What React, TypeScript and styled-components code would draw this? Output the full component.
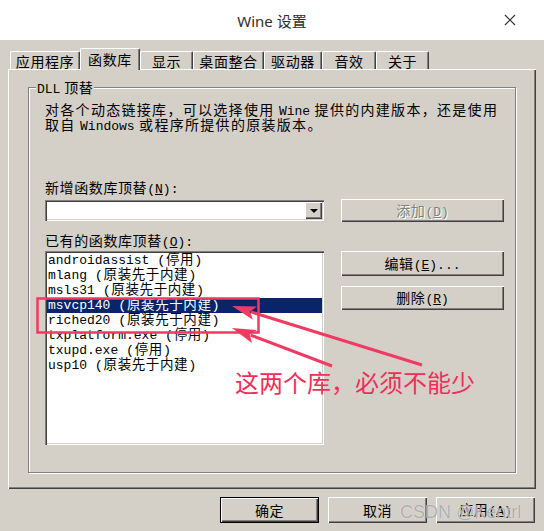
import React from 'react';
import styled, { createGlobalStyle, css } from 'styled-components';

const GlobalStyle = createGlobalStyle`
  html, body {
    margin: 0;
    padding: 0;
    background: #d4d0c8;
  }
  body {
    width: 544px;
    height: 531px;
    overflow: hidden;
  }
`;

const raised = css`
  box-shadow: inset 1px 1px 0 #fff, inset -1px -1px 0 #404040,
    inset -2px -2px 0 #808080;
`;

const sunken = css`
  box-shadow: inset 1px 1px 0 #808080, inset 2px 2px 0 #404040,
    inset -1px -1px 0 #fff, inset -2px -2px 0 #d4d0c8;
`;

const Window = styled.div`
  position: relative;
  width: 544px;
  height: 531px;
  background: #d4d0c8;
  display: flex;
  flex-direction: column;
  font-family: 'Noto Sans CJK SC', sans-serif;
  font-size: 14px;
  color: #000;
`;

const TitleBar = styled.div`
  height: 40px;
  background: #fff;
  display: grid;
  grid-template-columns: 1fr auto 1fr;
  align-items: center;
`;

const Title = styled.div`
  font-family: 'Noto Sans', 'Noto Sans CJK SC', sans-serif;
  font-size: 15px;
  color: #2e2e2e;
`;

const Close = styled.div`
  justify-self: end;
  margin-right: 28px;
  display: flex;
`;

const Body = styled.div`
  padding: 8px 8px 0 8px;
  display: flex;
  flex-direction: column;
`;

const TabStrip = styled.div`
  height: 21px;
  display: flex;
  align-items: flex-end;
  padding-left: 2px;
`;

const Tab = styled.div<{ $w: number; $active?: boolean }>`
  position: relative;
  box-sizing: border-box;
  width: ${(p) => p.$w}px;
  height: ${(p) => (p.$active ? 22 : 18)}px;
  margin-bottom: ${(p) => (p.$active ? -1 : 0)}px;
  z-index: ${(p) => (p.$active ? 1 : 0)};
  display: flex;
  align-items: center;
  justify-content: center;
  background: #d4d0c8;
  border-top: 1px solid #fff;
  border-left: 1px solid #fff;
  border-right: 1px solid #404040;
  box-shadow: inset -1px 0 0 #808080;
  border-radius: 2px 2px 0 0;
  line-height: 1;
  letter-spacing: 0.6px;
  padding-bottom: ${(p) => (p.$active ? 2 : 0)}px;
`;

const Panel = styled.div`
  box-sizing: border-box;
  height: 420px;
  padding: 10px 20px 16px 20px;
  display: flex;
  ${raised};
`;

const GroupBox = styled.fieldset`
  flex: 1;
  min-width: 0;
  margin: 0;
  padding: 7px 0 0 16px;
  border: 1px solid #808080;
  box-shadow: 1px 1px 0 #fff, inset 1px 1px 0 #fff;
`;

const Legend = styled.legend`
  margin-left: -9px;
  padding: 0 1px;
  height: 16px;
  background: #d4d0c8;
  line-height: 16px;
  letter-spacing: 0.6px;
`;

const Mono = styled.span`
  font-family: 'Liberation Mono', monospace;
  font-size: 13px;
  line-height: 1;
  letter-spacing: 0;
`;

const U = styled.span`
  text-decoration: underline;
`;

const Description = styled.div`
  letter-spacing: 1.3px;
  white-space: nowrap;
`;

const DescLine = styled.div`
  height: 15px;
  line-height: 15px;
`;

const Form = styled.div`
  margin-top: 48px;
  display: grid;
  grid-template-columns: 279px 163px;
  column-gap: 17px;
  align-items: center;
`;

const FieldLabel = styled.div<{ $top?: number; $bottom?: number }>`
  grid-column: 1 / -1;
  height: 14px;
  line-height: 14px;
  letter-spacing: 0.6px;
  margin-top: ${(p) => p.$top ?? 0}px;
  margin-bottom: ${(p) => p.$bottom ?? 0}px;
`;

const Combo = styled.div`
  box-sizing: border-box;
  height: 21px;
  background: #fff;
  display: flex;
  justify-content: flex-end;
  align-items: center;
  padding-right: 2px;
  ${sunken};
`;

const ComboButton = styled.div`
  width: 17px;
  height: 17px;
  background: #d4d0c8;
  display: flex;
  align-items: center;
  justify-content: center;
  ${raised};
`;

const Triangle = styled.div`
  width: 0;
  height: 0;
  border-left: 4px solid transparent;
  border-right: 4px solid transparent;
  border-top: 4px solid #000;
  margin-top: 1px;
`;

const Button = styled.button<{ $disabled?: boolean; $default?: boolean; $h?: number }>`
  box-sizing: border-box;
  width: 100%;
  height: ${(p) => p.$h ?? 24}px;
  padding: 0;
  border: none;
  background: #d4d0c8;
  font: inherit;
  letter-spacing: 0.6px;
  line-height: 1;
  color: ${(p) => (p.$disabled ? '#808080' : '#000')};
  text-shadow: ${(p) => (p.$disabled ? '1px 1px 0 #fff' : 'none')};
  ${raised};
  ${(p) =>
    p.$default &&
    css`
      box-shadow: inset 0 0 0 1px #000, inset 2px 2px 0 #fff,
        inset -2px -2px 0 #404040, inset -3px -3px 0 #808080;
    `}
`;

const ListBox = styled.div`
  box-sizing: border-box;
  height: 194px;
  background: #fff;
  padding: 2px 2px;
  align-self: start;
  ${sunken};
`;

const Row = styled.div<{ $selected?: boolean }>`
  height: 15px;
  line-height: 15px;
  padding-left: 1px;
  white-space: nowrap;
  font-family: 'Liberation Mono', 'Noto Sans CJK SC', monospace;
  font-size: 13px;
  background: ${(p) => (p.$selected ? '#0a246a' : 'transparent')};
  color: ${(p) => (p.$selected ? '#fff' : '#000')};
`;

const Status = styled.span`
  font-size: 13.5px;
  line-height: 1;
  letter-spacing: 0.6px;
`;

const ButtonStack = styled.div`
  align-self: start;
  display: flex;
  flex-direction: column;
  gap: 10px;
`;

const Footer = styled.div`
  display: flex;
  justify-content: flex-end;
  gap: 9px;
  padding: 8px 1px 0 0;
`;

const FooterButton = styled.div`
  width: 99px;
`;

const Overlay = styled.svg`
  position: absolute;
  left: 0;
  top: 0;
  pointer-events: none;
`;

const Note = styled.div`
  position: absolute;
  left: 235px;
  top: 370px;
  font-family: 'Noto Sans CJK SC', sans-serif;
  font-size: 24px;
  line-height: 24px;
  color: #ee2f58;
  white-space: nowrap;
`;

const Watermark = styled.div`
  position: absolute;
  left: 400px;
  top: 502px;
  font-family: 'Liberation Sans', Arial, sans-serif;
  font-size: 18px;
  line-height: 20px;
  color: rgba(150, 150, 150, 0.75);
  text-shadow: 0 0 1px rgba(255, 255, 255, 0.9);
  pointer-events: none;
`;

const tabs = [
  { label: '应用程序', w: 70 },
  { label: '函数库', w: 60, active: true },
  { label: '显示', w: 53 },
  { label: '桌面整合', w: 71 },
  { label: '驱动器', w: 58 },
  { label: '音效', w: 54 },
  { label: '关于', w: 53 },
];

const dlls = [
  { name: 'androidassist', mode: '停用' },
  { name: 'mlang', mode: '原装先于内建' },
  { name: 'msls31', mode: '原装先于内建' },
  { name: 'msvcp140', mode: '原装先于内建', selected: true },
  { name: 'riched20', mode: '原装先于内建' },
  { name: 'txplatform.exe', mode: '停用' },
  { name: 'txupd.exe', mode: '停用' },
  { name: 'usp10', mode: '原装先于内建' },
];

const RED = '#f03a62';

const Arrow: React.FC<{ from: [number, number]; to: [number, number] }> = ({ from, to }) => {
  const dx = to[0] - from[0];
  const dy = to[1] - from[1];
  const len = Math.hypot(dx, dy);
  const ux = dx / len;
  const uy = dy / len;
  const bx = to[0] - ux * 24;
  const by = to[1] - uy * 24;
  const nx = -uy;
  const ny = ux;
  const points = `${to[0]},${to[1]} ${bx + nx * 7},${by + ny * 7} ${bx + ux * 5},${by + uy * 5} ${bx - nx * 7},${by - ny * 7}`;
  return (
    <g>
      <line x1={from[0]} y1={from[1]} x2={bx + ux * 4} y2={by + uy * 4} stroke={RED} strokeWidth="3" />
      <polygon points={points} fill={RED} />
    </g>
  );
};

export default function App() {
  return (
    <>
      <GlobalStyle />
      <Window>
        <TitleBar>
          <span />
          <Title>Wine 设置</Title>
          <Close>
            <svg width="12" height="12" viewBox="0 0 12 12">
              <path d="M1 1L11 11M11 1L1 11" stroke="#333" strokeWidth="1.2" />
            </svg>
          </Close>
        </TitleBar>
        <Body>
          <TabStrip>
            {tabs.map((t) => (
              <Tab key={t.label} $w={t.w} $active={t.active}>
                {t.label}
              </Tab>
            ))}
          </TabStrip>
          <Panel>
            <GroupBox>
              <Legend>
                <Mono>DLL</Mono> 顶替
              </Legend>
              <Description>
                <DescLine>
                  对各个动态链接库，可以选择使用 <Mono>Wine</Mono> 提供的内建版本，还是使用
                </DescLine>
                <DescLine>
                  取自 <Mono>Windows</Mono> 或程序所提供的原装版本。
                </DescLine>
              </Description>
              <Form>
                <FieldLabel $bottom={5}>
                  新增函数库顶替<Mono>(<U>N</U>):</Mono>
                </FieldLabel>
                <Combo>
                  <ComboButton>
                    <Triangle />
                  </ComboButton>
                </Combo>
                <Button $disabled $h={23}>
                  添加<Mono>(<U>D</U>)</Mono>
                </Button>
                <FieldLabel $top={11} $bottom={4}>
                  已有的函数库顶替<Mono>(<U>O</U>):</Mono>
                </FieldLabel>
                <ListBox>
                  {dlls.map((d) => (
                    <Row key={d.name} $selected={d.selected}>
                      {d.name} <Status>({d.mode})</Status>
                    </Row>
                  ))}
                </ListBox>
                <ButtonStack>
                  <Button $h={25}>
                    编辑<Mono>(<U>E</U>)...</Mono>
                  </Button>
                  <Button>
                    删除<Mono>(<U>R</U>)</Mono>
                  </Button>
                </ButtonStack>
              </Form>
            </GroupBox>
          </Panel>
          <Footer>
            <FooterButton>
              <Button $default $h={26}>确定</Button>
            </FooterButton>
            <FooterButton>
              <Button $h={26}>取消</Button>
            </FooterButton>
            <FooterButton>
              <Button $h={26}>
                应用<Mono>(<U>A</U>)</Mono>
              </Button>
            </FooterButton>
          </Footer>
        </Body>
        <Overlay width="544" height="531" viewBox="0 0 544 531">
          <rect x="37.5" y="298.5" width="221" height="34" fill="none" stroke={RED} strokeWidth="2.5" />
          <Arrow from={[422, 365]} to={[232, 306]} />
          <Arrow from={[332, 366]} to={[232, 328]} />
        </Overlay>
        <Note>这两个库，必须不能少</Note>
        <Watermark>CSDN @Kentrl</Watermark>
      </Window>
    </>
  );
}
